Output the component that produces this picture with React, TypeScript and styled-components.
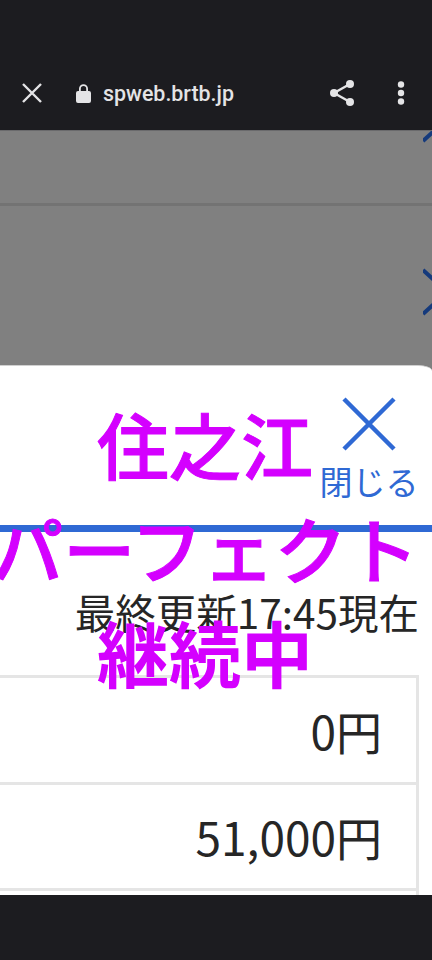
import React from 'react';
import styled, { createGlobalStyle } from 'styled-components';

const GlobalStyle = createGlobalStyle`
  html, body {
    margin: 0;
    padding: 0;
    background: #1c1c20;
  }
  #root {
    height: 960px;
  }
`;

const Screen = styled.div`
  width: 432px;
  height: 960px;
  display: flex;
  flex-direction: column;
  overflow: hidden;
  background: #1c1c20;
  font-family: 'Noto Sans CJK JP', 'Noto Sans', sans-serif;
`;

const StatusGap = styled.div`
  height: 60px;
  flex: none;
`;

const BrowserBar = styled.div`
  height: 70px;
  flex: none;
  display: flex;
  align-items: center;
  padding: 0 27px 4px 22px;
  box-sizing: border-box;
  color: #e4e4e6;
`;

const Url = styled.span`
  margin-left: 12px;
  flex: 1;
  font-family: Roboto, sans-serif;
  font-weight: 500;
  font-size: 21.4px;
`;

const LockIcon = styled.svg`
  margin-left: 34px;
`;

const ShareIcon = styled.svg`
  margin-right: 42px;
`;

const Content = styled.div`
  height: 765px;
  flex: none;
  display: flex;
  flex-direction: column;
  background: #808080;
  border-top: 1px solid #6a6a6c;
  box-sizing: border-box;
`;

const BackRow = styled.div<{ $height: number }>`
  height: ${(p) => p.$height}px;
  flex: none;
  box-sizing: border-box;
  display: flex;
  justify-content: flex-end;
  align-items: flex-start;
  overflow: hidden;
`;

const DividedRow = styled(BackRow)`
  border-bottom: 3px solid #737373;
`;

const Sheet = styled.div`
  flex: 1;
  min-height: 0;
  background: #fff;
  border-top: 1px solid #d0d0d0;
  border-top-right-radius: 14px 6px;
  overflow: hidden;
`;

const Header = styled.div`
  height: 166px;
  box-sizing: border-box;
  border-bottom: 7px solid #2f69d4;
  display: flex;
  align-items: flex-start;
  justify-content: space-between;
  padding: 0 7px 0 97px;
`;

const Title = styled.div`
  padding-top: 33px;
  white-space: nowrap;
  font-size: 72px;
  line-height: 88px;
  font-weight: 500;
  -webkit-text-stroke: 1px #d400ff;
  color: #d400ff;
`;

const CloseButton = styled.div`
  width: 112px;
  margin-left: -112px;
  flex: none;
  display: flex;
  flex-direction: column;
  align-items: center;
  padding-top: 31px;
  color: #2f69d4;
  font-size: 33px;
  line-height: 44px;
`;

const CloseLabel = styled.span`
  margin-top: 8px;
`;

const Perfect = styled.div`
  width: 410px;
  position: relative;
  margin-top: -29px;
  white-space: nowrap;
  font-size: 72px;
  line-height: 88px;
  font-weight: 500;
  -webkit-text-stroke: 1px #d400ff;
  color: #d400ff;
  display: flex;
  justify-content: center;
`;

const Updated = styled.div`
  margin-top: -7px;
  padding-right: 13px;
  text-align: right;
  font-size: 40.5px;
  line-height: 56px;
  color: #262626;
`;

const Continuing = styled.div`
  width: 410px;
  position: relative;
  margin-top: -33px;
  margin-bottom: -20px;
  text-align: center;
  font-size: 72px;
  line-height: 88px;
  font-weight: 700;
  color: #d400ff;
`;

const Table = styled.div`
  width: 419px;
  box-sizing: border-box;
  border-top: 3px solid #e5e5e5;
  border-right: 3px solid #e5e5e5;
`;

const TableRow = styled.div`
  height: 106.5px;
  box-sizing: border-box;
  border-bottom: 3px solid #e5e5e5;
  padding-right: 34px;
  display: flex;
  align-items: center;
  justify-content: flex-end;
  font-size: 46px;
  color: #262626;
`;

const Chevron = ({ top }: { top: number }) => (
  <svg width="9" height="60" viewBox="0 0 9 60" style={{ marginTop: top }}>
    <path d="M0 2 L24 24 M0 46 L24 24" stroke="#153a7c" strokeWidth="4" fill="none" />
  </svg>
);

export default function App() {
  return (
    <>
      <GlobalStyle />
      <Screen>
        <StatusGap />
        <BrowserBar>
          <svg width="20" height="20" viewBox="0 0 20 20">
            <path d="M1 1 L19 19 M19 1 L1 19" stroke="#e4e4e6" strokeWidth="2.4" fill="none" />
          </svg>
          <LockIcon width="15" height="19" viewBox="0 0 15 19">
            <path
              d="M2 7 H3 V4.8 A4.5 4.5 0 0 1 12 4.8 V7 H13 A2 2 0 0 1 15 9 V17 A2 2 0 0 1 13 19 H2 A2 2 0 0 1 0 17 V9 A2 2 0 0 1 2 7 Z M4.8 7 H10.2 V4.8 A2.7 2.7 0 0 0 4.8 4.8 Z"
              fill="#e4e4e6"
              fillRule="evenodd"
            />
          </LockIcon>
          <Url>spweb.brtb.jp</Url>
          <ShareIcon width="25" height="28" viewBox="1 0 25 28">
            <path d="M21 5 L5 14 L21 23" stroke="#e4e4e6" strokeWidth="2.4" fill="none" />
            <circle cx="21" cy="5" r="4" fill="#e4e4e6" />
            <circle cx="5" cy="14" r="4" fill="#e4e4e6" />
            <circle cx="21" cy="23" r="4" fill="#e4e4e6" />
          </ShareIcon>
          <svg width="8" height="24" viewBox="0 0 8 24">
            <circle cx="4" cy="3.5" r="3.2" fill="#e4e4e6" />
            <circle cx="4" cy="12" r="3.2" fill="#e4e4e6" />
            <circle cx="4" cy="20.5" r="3.2" fill="#e4e4e6" />
          </svg>
        </BrowserBar>
        <Content>
          <DividedRow $height={75}>
            <svg width="9" height="12" viewBox="0 0 9 12">
              <path d="M0 10 L12 -1" stroke="#153a7c" strokeWidth="4" fill="none" />
            </svg>
          </DividedRow>
          <BackRow $height={159}>
            <Chevron top={62} />
          </BackRow>
          <Sheet>
            <Header>
              <Title>住之江</Title>
              <CloseButton>
                <svg width="54" height="54" viewBox="0 0 54 54">
                  <path d="M2 2 L52 52 M52 2 L2 52" stroke="#2f69d4" strokeWidth="4.5" fill="none" />
                </svg>
                <CloseLabel>閉じる</CloseLabel>
              </CloseButton>
            </Header>
            <Perfect>パーフェクト</Perfect>
            <Updated>最終更新17:45現在</Updated>
            <Continuing>継続中</Continuing>
            <Table>
              <TableRow>0円</TableRow>
              <TableRow>51,000円</TableRow>
              <TableRow />
            </Table>
          </Sheet>
        </Content>
      </Screen>
    </>
  );
}
